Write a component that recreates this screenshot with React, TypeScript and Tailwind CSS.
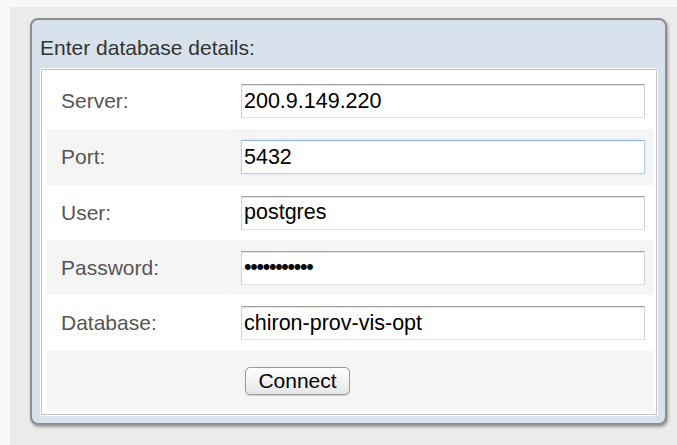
import React from "react";

type Field = {
  label: string;
  value: string;
  type?: "text" | "password";
  focused?: boolean;
  h: string;
};

const fields: Field[] = [
  { label: "Server:", value: "200.9.149.220", h: "h-[56px]" },
  { label: "Port:", value: "5432", focused: true, h: "h-[56px]" },
  { label: "User:", value: "postgres", h: "h-[55px]" },
  { label: "Password:", value: "12345678901", type: "password", h: "h-[55px]" },
  { label: "Database:", value: "chiron-prov-vis-opt", h: "h-[56px]" },
];

function TextBox({ field }: { field: Field }) {
  const edge = field.focused
    ? "border-[#b9d0ee] border-t-[#8fb1de] shadow-[0_0_2px_#cfe0f6]"
    : "border-[#d2d2d2] border-t-[#a2a2a2] border-b-[#e2e2e2] shadow-[inset_0_1px_0_#e4e4e4]";
  return (
    <input
      readOnly
      type={field.type ?? "text"}
      defaultValue={field.value}
      className={`ml-[11px] h-[34px] w-[404px] border bg-white px-[2px] text-[21.5px] text-black outline-none ${
        field.type === "password" ? "tracking-[-1.3px]" : ""
      } ${edge}`}
    />
  );
}

export default function App() {
  return (
    <div className="h-[445px] w-[677px] overflow-hidden bg-[#f8f8f8] font-['Liberation_Sans',Arial,sans-serif]">
      <div className="ml-[10px] mt-[7px] h-[438px] bg-[#ebebeb] pl-[20px] pr-[10px] pt-[11px]">
        <div className="h-[407px] w-[637px] rounded-[8px] border-2 border-[#8e8e8e] bg-[#d7e2ed] shadow-[1px_2px_3px_rgba(0,0,0,0.35)]">
          <div className="h-[49px] pl-[8px] pt-[16px] text-[21px] leading-[24px] text-[#333]">
            Enter database details:
          </div>

          <div className="ml-[9px] mr-[8px] border border-[#c4c4c4] bg-white pb-[3px] pl-[5px] pr-[2px] pt-[3px] shadow-[0_0_0_1px_#fff]">
            {fields.map((f, i) => (
              <div
                key={f.label}
                className={`flex ${f.h} ${i % 2 === 1 ? "bg-[#f5f5f5]" : "bg-white"}`}
              >
                <div className="flex w-[182px] items-center pl-[14px] text-[21px] text-[#555]">
                  {f.label}
                </div>
                <div className="w-px bg-white" />
                <div className="flex flex-1 items-center">
                  <TextBox field={f} />
                </div>
              </div>
            ))}
            <div className="flex h-[60px] bg-[#f5f5f5]">
              <div className="w-[182px]" />
              <div className="w-px bg-white" />
              <div className="flex flex-1 items-center pl-[15px]">
                <button
                  type="button"
                  className="h-[28px] w-[105px] rounded-[5px] border border-[#9a9a9a] bg-gradient-to-b from-white to-[#e6e6e6] text-[21px] leading-[24px] text-black shadow-[0_1px_1px_rgba(0,0,0,0.15)]"
                >
                  Connect
                </button>
              </div>
            </div>
          </div>
        </div>
      </div>
    </div>
  );
}
